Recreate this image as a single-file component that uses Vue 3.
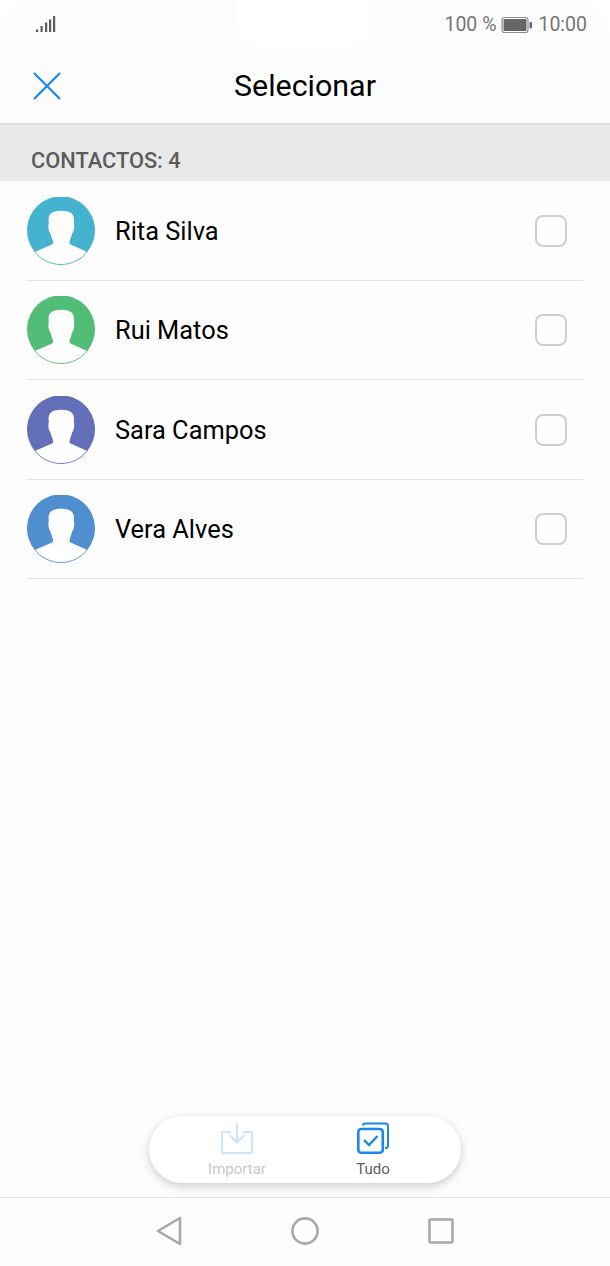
<script setup>
const contacts = [
  { name: 'Rita Silva', color: '#45b2cf' },
  { name: 'Rui Matos', color: '#52bd77' },
  { name: 'Sara Campos', color: '#636fb9' },
  { name: 'Vera Alves', color: '#4f8fcf' }
]
</script>

<template>
  <div class="screen">
    <div class="notch"></div>

    <div class="status">
      <svg class="signal" width="20" height="18" viewBox="0 0 20 18">
        <rect x="0" y="13.5" width="2.2" height="2.5" />
        <rect x="4.5" y="10" width="2.2" height="6" />
        <rect x="9" y="6.5" width="2.2" height="9.5" />
        <rect x="13" y="3.5" width="2.2" height="12.5" />
        <rect x="17" y="0" width="2.2" height="16" />
      </svg>
      <div class="status-right">
        <span>100 %</span>
        <svg class="battery" width="32" height="18" viewBox="0 0 32 18">
          <rect x="1" y="1.5" width="26" height="15" rx="2.5" fill="none" stroke="#8c8c8c" stroke-width="1.2" />
          <rect x="2.5" y="3" width="23" height="12" rx="1" fill="#666" />
          <rect x="28.5" y="6" width="2.5" height="6.5" rx="1" fill="#666" />
        </svg>
        <span>10:00</span>
      </div>
    </div>

    <header class="header">
      <svg class="close" width="30" height="30" viewBox="0 0 30 30">
        <path d="M2 2 L28 28 M28 2 L2 28" stroke="#1a87ec" stroke-width="2.2" fill="none" />
      </svg>
      <h1 class="title">Selecionar</h1>
    </header>

    <div class="section">CONTACTOS: 4</div>

    <ul class="list">
      <li v-for="c in contacts" :key="c.name" class="row">
        <svg class="avatar" width="68" height="68" viewBox="0 0 68 68">
          <path d="M7.5 54.5 A33.5 33.5 0 0 0 60.5 54.5" fill="#fff" :stroke="c.color" stroke-width="0.9" />
          <path
            d="M7.8 55 L25 47.5 C26 47 26.3 46 26 44.5 L23.2 36 C21.6 34 20.8 29 21.8 26 C21 20 21.5 13.7 34.3 13.7 C47 13.7 47.5 20 46.8 26 C47.8 29 47 34 45.4 36 L42.6 44.5 C42.3 46 42.6 47 43.6 47.5 L60.2 55 A34 34 0 1 0 7.8 55 Z"
            :fill="c.color"
          />
        </svg>
        <span class="name">{{ c.name }}</span>
        <span class="check"></span>
      </li>
    </ul>

    <div class="pill-wrap">
      <div class="pill">
        <div class="action disabled">
          <svg width="34" height="32" viewBox="0 0 34 32" fill="none" stroke="#cfe5fb" stroke-width="2.2">
            <path d="M11 10 H2 V29.5 Q2 31 3.5 31 H30.5 Q32 31 32 29.5 V10 H23" />
            <path d="M17 1 V20 M9.5 13 L17 20.5 L24.5 13" />
          </svg>
          <span>Importar</span>
        </div>
        <div class="action">
          <svg width="34" height="32" viewBox="0 0 34 32" fill="none" stroke="#1a87ec">
            <path d="M7 3.5 V3.5 Q7 1.5 9 1.5 H29 Q32 1.5 32 4 V24 Q32 26 29.5 26 H29" stroke-width="2" />
            <rect x="2.3" y="7" width="24.5" height="23.7" rx="3" stroke-width="2.6" />
            <path d="M8 18 L13 23 L21.5 14" stroke-width="2.4" />
          </svg>
          <span>Tudo</span>
        </div>
      </div>
    </div>

    <nav class="nav">
      <svg width="26" height="30" viewBox="0 0 26 30" fill="none" stroke="#a8a8a8" stroke-width="2.6" stroke-linejoin="round">
        <path d="M24 2 V28 L2 15 Z" />
      </svg>
      <svg width="30" height="30" viewBox="0 0 30 30" fill="none" stroke="#a8a8a8" stroke-width="2.6">
        <circle cx="15" cy="15" r="12.6" />
      </svg>
      <svg width="26" height="26" viewBox="0 0 26 26" fill="none" stroke="#a8a8a8" stroke-width="2.6" stroke-linejoin="round">
        <rect x="1.5" y="1.5" width="23" height="23" rx="1" />
      </svg>
    </nav>
  </div>
</template>

<style>
html, body {
  margin: 0;
  background: #fff;
}
</style>

<style scoped>
.screen {
  position: relative;
  display: flex;
  flex-direction: column;
  width: 610px;
  height: 1266px;
  overflow: hidden;
  background: #fdfdfd;
  border-radius: 36px 36px 0 0;
  font-family: Roboto, "Liberation Sans", sans-serif;
}

.notch {
  position: absolute;
  top: 0;
  left: 235px;
  width: 137px;
  height: 47px;
  background: #fff;
  border-radius: 0 0 26px 26px;
}

.status {
  position: relative;
  display: flex;
  align-items: center;
  justify-content: space-between;
  height: 48px;
  box-sizing: border-box;
  padding: 1px 23px 0 36px;
  color: #757575;
  font-size: 19.5px;
  flex: none;
}

.signal {
  fill: #5c5c5c;
}

.status-right {
  display: flex;
  align-items: center;
  gap: 5px;
}

.header {
  position: relative;
  display: flex;
  align-items: center;
  justify-content: center;
  height: 77px;
  border-bottom: 2px solid #e2e2e2;
  box-sizing: border-box;
  flex: none;
}

.close {
  position: absolute;
  left: 32px;
  top: 23px;
}

.title {
  margin: 0;
  font-size: 30.4px;
  font-weight: 400;
  color: #000;
}

.section {
  display: flex;
  align-items: center;
  height: 56px;
  padding: 14px 0 0 31px;
  box-sizing: border-box;
  background: #e9e9e9;
  color: #5c5c5c;
  font-size: 21.8px;
  font-weight: 500;
  flex: none;
}

.list {
  flex: 1;
  margin: 0;
  padding: 0 27px;
  list-style: none;
}

.row {
  display: flex;
  align-items: center;
  height: 99.5px;
  box-sizing: border-box;
  padding: 1px 16px 0 0;
  border-bottom: 1px solid #e3e3e3;
}

.avatar {
  flex: none;
}

.name {
  flex: 1;
  margin-left: 20px;
  font-size: 25.4px;
  color: #000;
}

.check {
  width: 32px;
  height: 32px;
  box-sizing: border-box;
  border: 2px solid #cfcfcf;
  border-radius: 8px;
}

.pill-wrap {
  display: flex;
  justify-content: center;
  padding-bottom: 14px;
  flex: none;
}

.pill {
  display: flex;
  justify-content: space-between;
  width: 312px;
  height: 67px;
  box-sizing: border-box;
  padding: 6px 58px 0 58px;
  background: #fff;
  border-radius: 34px;
  box-shadow: 0 3px 10px rgba(0, 0, 0, 0.2);
}

.action {
  display: flex;
  flex-direction: column;
  align-items: center;
  gap: 6px;
  width: 60px;
  color: #5e5e5e;
  font-size: 15px;
}

.action.disabled {
  color: #c8c8c8;
}

.nav {
  display: flex;
  align-items: center;
  justify-content: center;
  gap: 108px;
  height: 69px;
  box-sizing: border-box;
  padding-bottom: 2px;
  border-top: 1px solid #e3e3e3;
  flex: none;
}
</style>
